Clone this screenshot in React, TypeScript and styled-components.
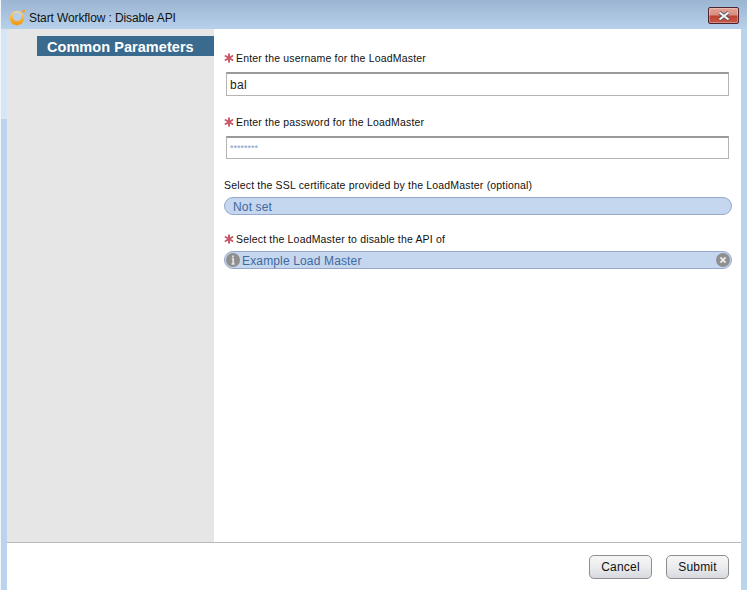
import React from "react";
import styled, { createGlobalStyle } from "styled-components";

const Global = createGlobalStyle`
  html, body { margin: 0; padding: 0; background: #fff; }
  body { font-family: "Liberation Sans", Arial, sans-serif; }
`;

const Window = styled.div`
  width: 747px;
  height: 590px;
  display: flex;
  flex-direction: column;
  box-sizing: border-box;
  padding: 0 6px 0 6px;
  border-left: 1px solid #f2f6fb;
  background-color: #bbd3ec;
  background-image:
    linear-gradient(to bottom, #9bb5d2 0, #b7d1eb 100%),
    linear-gradient(to bottom, #d6e6f7 0, #d6e6f7 100%);
  background-size: 100% 29px, 6px 119px;
  background-repeat: no-repeat;
  background-position: 0 0, 0 0;
  overflow: hidden;
`;

const TitleBar = styled.div`
  height: 29px;
  flex: none;
  display: flex;
  align-items: center;
  margin-left: -6px;
  margin-right: -6px;
  padding: 0 11px 0 8px;
`;

const Title = styled.span`
  font-size: 12px;
  letter-spacing: -0.11px;
  color: #111;
  margin-left: 4px;
  margin-top: 7px;
  flex: 1;
`;

const AppLogo = styled.svg`
  width: 17px;
  height: 17px;
  margin-top: 5px;
  margin-right: -1px;
  flex: none;
`;

const CloseButton = styled.div`
  width: 31px;
  height: 17px;
  margin-top: 2px;
  margin-right: -3px;
  box-sizing: border-box;
  border: 1px solid #4a2430;
  border-radius: 2px;
  display: flex;
  align-items: center;
  justify-content: center;
  background: linear-gradient(to bottom, #e3a193 0, #d98f80 45%, #bd4333 55%, #c75a45 100%);
  box-shadow: inset 0 0 0 1px rgba(255, 255, 255, 0.3);
`;

const Dialog = styled.div`
  flex: 1;
  background: #fff;
  display: flex;
  flex-direction: column;
  min-height: 0;
`;

const Body = styled.div`
  height: 513px;
  flex: none;
  display: flex;
`;

const Sidebar = styled.nav`
  width: 207px;
  flex: none;
  background: #e6e6e6;
  padding: 7px 0 0 30px;
  box-sizing: border-box;
`;

const SectionTab = styled.div`
  height: 20px;
  line-height: 22px;
  background: #3a6a8d;
  color: #fff;
  font-size: 14.5px;
  letter-spacing: 0.05px;
  font-weight: bold;
  padding-left: 10px;
`;

const Form = styled.div`
  flex: 1;
  padding: 0 10px 0 10px;
  display: flex;
  flex-direction: column;
`;

const Label = styled.div<{ $top: number }>`
  margin-top: ${(p) => p.$top}px;
  height: 14px;
  display: flex;
  align-items: center;
  font-size: 10.5px;
  letter-spacing: 0.18px;
  color: #111;
  white-space: nowrap;
`;

const Required = styled.svg`
  width: 10px;
  height: 10px;
  margin-right: 2px;
  flex: none;
`;

const TextBox = styled.div<{ $h: number; $masked?: boolean }>`
  margin: 7px 3px 0 2px;
  height: ${(p) => p.$h}px;
  box-sizing: border-box;
  border: 1px solid #b4b4b4;
  border-top: 2px solid #9a9a9a;
  background: #fff;
  padding-left: 3px;
  display: flex;
  align-items: center;
  font-size: ${(p) => (p.$masked ? "9px" : "12px")};
  letter-spacing: ${(p) => (p.$masked ? "0" : "0.3px")};
  color: ${(p) => (p.$masked ? "#7f9cc6" : "#222")};
`;

const Pill = styled.div`
  margin: 5px 0 0 0;
  width: 508px;
  height: 18px;
  box-sizing: border-box;
  border: 1px solid #96a9cc;
  border-radius: 9px;
  background: #c5d6ef;
  display: flex;
  align-items: center;
  padding: 0 1px;
  font-size: 12px;
  letter-spacing: 0.15px;
  line-height: 18px;
  color: #3f6a9d;
`;

const PillText = styled.span<{ $inset: number }>`
  flex: 1;
  margin-left: ${(p) => p.$inset}px;
  padding-top: 1px;
`;

const RoundIcon = styled.svg`
  width: 14px;
  height: 14px;
  flex: none;
`;

const Footer = styled.div`
  flex: 1;
  border-top: 1px solid #b9b9b9;
  display: flex;
  justify-content: flex-end;
  align-items: flex-start;
  gap: 14px;
  padding: 12px 12px 0 0;
`;

const Button = styled.button`
  width: 63px;
  height: 24px;
  padding: 0;
  box-sizing: border-box;
  border: 1px solid #8e8e8e;
  border-radius: 5px;
  background: linear-gradient(to bottom, #f6f6f6 0, #ebecee 50%, #d6d9de 100%);
  font-family: "Liberation Sans", Arial, sans-serif;
  font-size: 12px;
  letter-spacing: 0.2px;
  color: #111;
`;

const Star = () => (
  <Required viewBox="0 0 10 10">
    <g stroke="#c9596a" strokeWidth="2" strokeLinecap="round">
      <path d="M5 1.2v7.6M1.6 3l6.8 4M8.4 3L1.6 7" />
    </g>
  </Required>
);

export default function App() {
  return (
    <>
      <Global />
      <Window>
        <TitleBar>
          <AppLogo viewBox="0 0 17 17">
            <defs>
              <linearGradient id="ring" x1="0" y1="0" x2="0" y2="1">
                <stop offset="0" stopColor="#f9d99a" />
                <stop offset="0.5" stopColor="#f6b23c" />
                <stop offset="1" stopColor="#f0970f" />
              </linearGradient>
            </defs>
            <circle cx="8" cy="9.2" r="7.2" fill="url(#ring)" />
            <circle cx="8.2" cy="7.8" r="4.3" fill="#b5cfe9" />
            <circle cx="14.6" cy="2" r="1.5" fill="#f2a02a" />
          </AppLogo>
          <Title>Start Workflow : Disable API</Title>
          <CloseButton>
            <svg width="14" height="10" viewBox="0 0 14 10">
              <path d="M2.5 1.5l9 7M11.5 1.5l-9 7" stroke="#50505a" strokeWidth="3.6" />
              <path d="M2.5 1.5l9 7M11.5 1.5l-9 7" stroke="#f4f4f6" strokeWidth="2.2" />
            </svg>
          </CloseButton>
        </TitleBar>
        <Dialog>
          <Body>
            <Sidebar>
              <SectionTab>Common Parameters</SectionTab>
            </Sidebar>
            <Form>
              <Label $top={22}><Star />Enter the username for the LoadMaster</Label>
              <TextBox $h={24}>bal</TextBox>
              <Label $top={19}><Star />Enter the password for the LoadMaster</Label>
              <TextBox $h={23} $masked>********</TextBox>
              <Label $top={19}>Select the SSL certificate provided by the LoadMaster (optional)</Label>
              <Pill><PillText $inset={7}>Not set</PillText></Pill>
              <Label $top={17}><Star />Select the LoadMaster to disable the API of</Label>
              <Pill>
                <RoundIcon viewBox="0 0 14 14">
                  <circle cx="7" cy="7" r="7" fill="#8f8f8f" />
                  <path d="M7 2.6v1.8M5.8 6h1.4v4.4M5.6 10.8h3" stroke="#e4e4e4" strokeWidth="1.7" fill="none" />
                </RoundIcon>
                <PillText $inset={2}>Example Load Master</PillText>
                <RoundIcon viewBox="0 0 14 14">
                  <circle cx="7" cy="7" r="7" fill="#8f8f8f" />
                  <path d="M4.4 4.4l5.2 5.2M9.6 4.4L4.4 9.6" stroke="#e8e8e8" strokeWidth="2" />
                </RoundIcon>
              </Pill>
            </Form>
          </Body>
          <Footer>
            <Button>Cancel</Button>
            <Button>Submit</Button>
          </Footer>
        </Dialog>
      </Window>
    </>
  );
}
